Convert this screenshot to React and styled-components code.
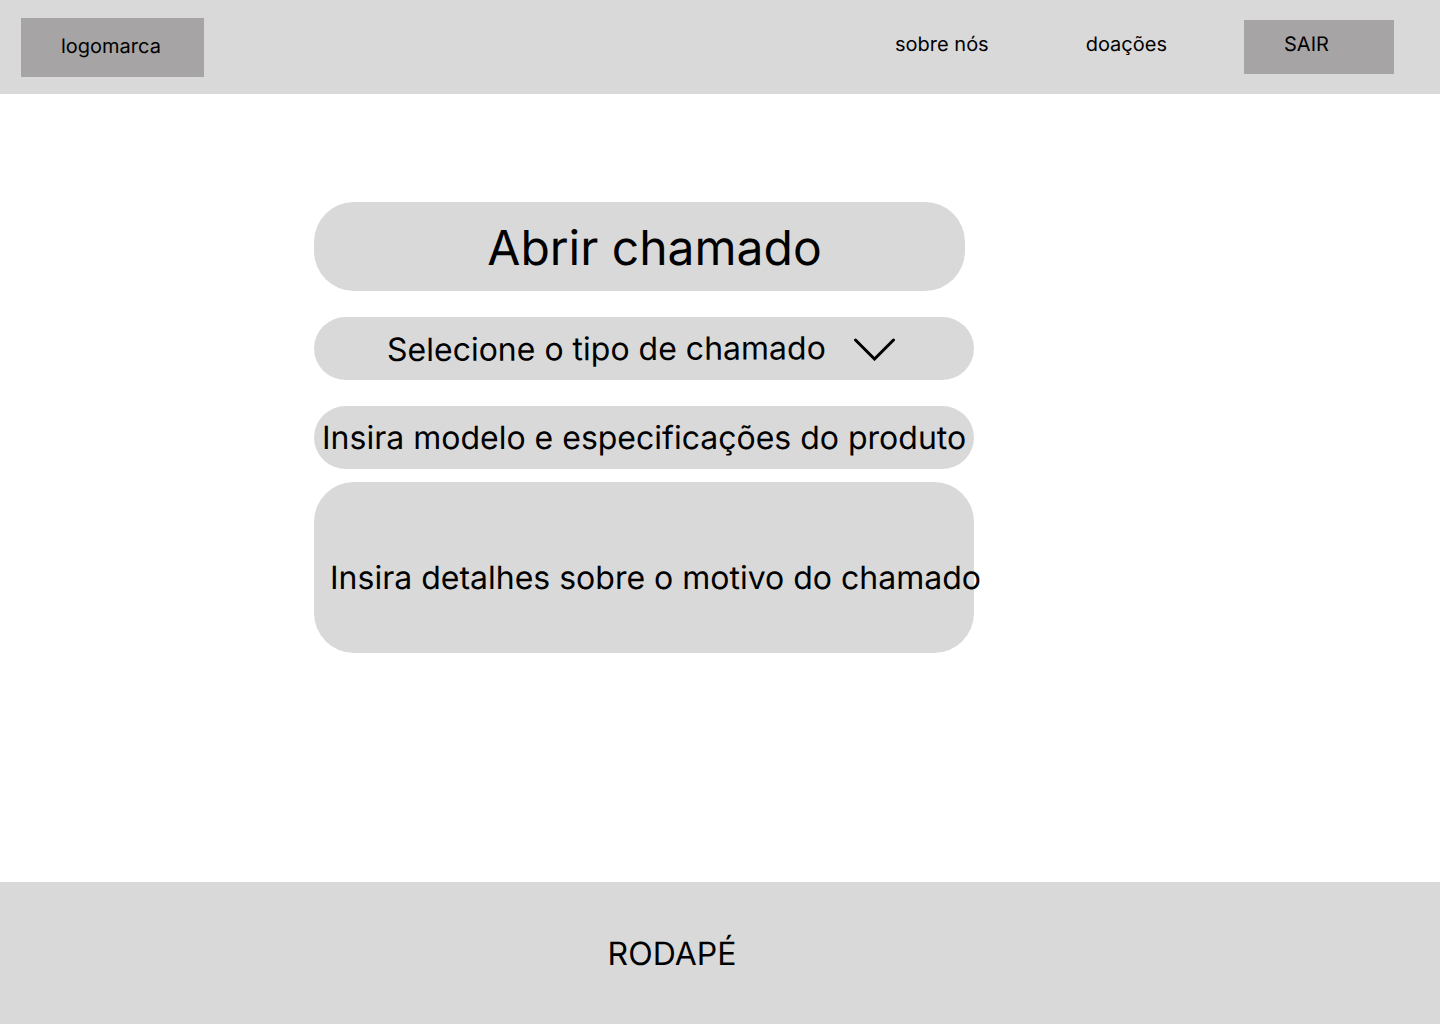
import React from "react";
import styled, { createGlobalStyle, css } from "styled-components";

const GlobalStyle = createGlobalStyle`
  * {
    box-sizing: border-box;
  }
  body {
    margin: 0;
    background: #ffffff;
    color: #000000;
    font-family: Inter, "Liberation Sans", sans-serif;
    text-rendering: geometricPrecision;
  }
`;

const Page = styled.div`
  display: flex;
  flex-direction: column;
  min-height: 100vh;
`;

const Header = styled.header`
  display: flex;
  align-items: center;
  justify-content: space-between;
  min-height: 94px;
  padding: 0 46px 0 21px;
  background: #d9d9d9;
  font-size: 20px;
  line-height: 24px;
`;

const Logo = styled.a`
  min-width: 183px;
  padding: 16px 40px 19px;
  background: #a6a4a4;
  color: inherit;
  text-decoration: none;
`;

const Nav = styled.nav`
  display: flex;
  align-items: center;
`;

const NavLink = styled.a`
  margin-right: ${({ $gap }) => $gap}px;
  padding-bottom: 6px;
  color: inherit;
  text-decoration: none;
`;

const ExitButton = styled.button`
  width: 150px;
  height: 54px;
  padding: 0 40px 6px;
  border: 0;
  background: #a6a4a4;
  color: inherit;
  font: inherit;
  text-align: left;
  text-rendering: inherit;
  cursor: pointer;
`;

const Main = styled.main`
  display: grid;
  grid-template-columns: 314fr minmax(0, 660px) 466fr;
  flex: 1;
  padding: 108px 0 64px;
`;

const TicketForm = styled.form`
  grid-column: 2;
  display: flex;
  flex-direction: column;
  gap: 26px;
`;

const Title = styled.h1`
  margin: 0 9px 0 0;
  padding: 17px 0 14px 30px;
  border-radius: 40px;
  background: #d9d9d9;
  font-size: 48px;
  font-weight: 400;
  line-height: 58px;
  text-align: center;
`;

const Details = styled.div`
  display: flex;
  flex-direction: column;
  gap: 13px;
`;

const Field = styled.div`
  display: grid;
  align-items: center;
  border-radius: ${({ $large }) => ($large ? 40 : 32)}px;
  background: #d9d9d9;
`;

const control = css`
  grid-area: 1 / 1;
  min-width: 0;
  margin: 0;
  border: 0;
  border-radius: 32px;
  background: transparent;
  color: inherit;
  font: inherit;
  font-size: 32px;
  line-height: 39px;
  text-rendering: inherit;

  &::placeholder {
    color: inherit;
    opacity: 1;
  }
`;

const TypeSelect = styled.select`
  ${control}
  width: 100%;
  height: 63px;
  padding: 0 73px;
  appearance: none;
  transform: rotate(-0.25deg);
`;

const Chevron = styled.svg`
  grid-area: 1 / 1;
  justify-self: end;
  width: 42px;
  height: 24px;
  margin-right: 79px;
  pointer-events: none;
`;

const ModelInput = styled.input`
  ${control}
  width: 100%;
  height: 63px;
  padding: 0 8px;
`;

const ReasonTextarea = styled.textarea`
  ${control}
  height: 171px;
  margin-right: -16px;
  padding: 76px 0 0 16px;
  overflow: hidden;
  resize: none;
  white-space: pre;
`;

const Footer = styled.footer`
  display: flex;
  align-items: center;
  justify-content: center;
  min-height: 142px;
  padding-right: 96px;
  background: #d9d9d9;
  font-size: 32px;
  line-height: 39px;
`;

export default function App() {
  return (
    <Page>
      <GlobalStyle />
      <Header>
        <Logo href="#">logomarca</Logo>
        <Nav>
          <NavLink href="#sobre" $gap={97}>sobre nós</NavLink>
          <NavLink href="#doacoes" $gap={77}>doações</NavLink>
          <ExitButton type="button">SAIR</ExitButton>
        </Nav>
      </Header>
      <Main>
        <TicketForm>
          <Title>Abrir chamado</Title>
          <Field>
            <TypeSelect aria-label="Selecione o tipo de chamado" defaultValue="">
              <option value="">Selecione o tipo de chamado</option>
            </TypeSelect>
            <Chevron viewBox="0 0 42 24" fill="none" aria-hidden="true">
              <path
                d="M2.5 3 21.5 22 40.5 3"
                stroke="#000000"
                strokeWidth="3"
                strokeLinecap="round"
              />
            </Chevron>
          </Field>
          <Details>
            <Field>
              <ModelInput
                type="text"
                aria-label="Insira modelo e especificações do produto"
                placeholder="Insira modelo e especificações do produto"
              />
            </Field>
            <Field $large>
              <ReasonTextarea
                aria-label="Insira detalhes sobre o motivo do chamado"
                placeholder="Insira detalhes sobre o motivo do chamado"
              />
            </Field>
          </Details>
        </TicketForm>
      </Main>
      <Footer>RODAPÉ</Footer>
    </Page>
  );
}
